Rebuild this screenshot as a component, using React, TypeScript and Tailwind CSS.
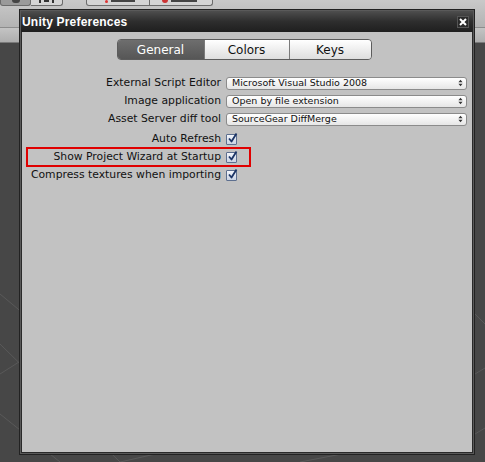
import React from 'react';

const rows = [
  { label: 'External Script Editor', value: 'Microsoft Visual Studio 2008' },
  { label: 'Image application', value: 'Open by file extension' },
  { label: 'Asset Server diff tool', value: 'SourceGear DiffMerge' },
];

const checks = [
  { label: 'Auto Refresh' },
  { label: 'Show Project Wizard at Startup', marked: true },
  { label: 'Compress textures when importing' },
];

function Checkbox() {
  return (
    <div className="w-[11px] h-[11px] border border-[#5d6f8f] rounded-[1px] bg-gradient-to-b from-[#f4f6fb] to-[#c9d3e4] relative">
      <svg viewBox="0 0 11 11" className="absolute -top-[2px] left-0 w-[11px] h-[11px] overflow-visible">
        <path d="M2 5.5 L4.5 8.5 L9.5 0.5" fill="none" stroke="#1c3566" strokeWidth="1.8" strokeLinejoin="round" />
      </svg>
    </div>
  );
}

function Dropdown({ value }: { value: string }) {
  return (
    <div className="w-[241px] h-[13px] rounded-[3px] border border-[#8b8b8b] bg-gradient-to-b from-white to-[#e6e6e6] flex items-center justify-between pl-[5px] pr-[3px] text-[9.5px] leading-none text-[#111]">
      <span>{value}</span>
      <svg viewBox="0 0 6 9" className="w-[5px] h-[8px]">
        <path d="M0.5 3.5 L3 0.5 L5.5 3.5 Z M0.5 5.5 L3 8.5 L5.5 5.5 Z" fill="#333" />
      </svg>
    </div>
  );
}

export default function App() {
  return (
    <div
      className="relative w-[485px] h-[462px] overflow-hidden bg-[#474747]"
      style={{ fontFamily: '"DejaVu Sans", "Liberation Sans", sans-serif' }}
    >
      {/* toolbar strip */}
      <div className="h-[28px] bg-gradient-to-b from-[#c9c9c9] to-[#b3b3b3] border-b border-[#8c8c8c] relative">
        <div className="flex">
          <div className="w-[31px] h-[6px] bg-[#9a9a9a] border border-t-0 border-[#6b6b6b] rounded-b-[3px] flex justify-center">
            <div className="w-[8px] h-[3px] bg-[#444] rounded-b-full" />
          </div>
          <div className="w-[32px] h-[6px] bg-[#d4d4d4] border border-t-0 border-l-0 border-[#6b6b6b] rounded-br-[3px] flex justify-center gap-[3px]">
            <div className="w-[2px] h-[3px] bg-[#333]" />
            <div className="w-[5px] h-[2px] bg-[#333]" />
            <div className="w-[2px] h-[3px] bg-[#333]" />
          </div>
          <div className="ml-[23px] w-[64px] h-[6px] bg-[#d4d4d4] border border-t-0 border-[#6b6b6b] rounded-bl-[3px] flex items-start pl-[18px] gap-[3px]">
            <div className="w-[3px] h-[3px] bg-[#d33] rounded-full" />
            <div className="w-[24px] h-[2px] bg-[#444]" />
          </div>
          <div className="w-[63px] h-[6px] bg-[#d4d4d4] border border-t-0 border-l-0 border-[#6b6b6b] rounded-br-[3px] flex items-start pl-[12px] gap-[3px]">
            <div className="w-[6px] h-[3px] bg-[#c33] rounded-b-full" />
            <div className="w-[26px] h-[2px] bg-[#444]" />
          </div>
        </div>
      </div>
      <div className="h-[15px] bg-gradient-to-b from-[#c4c4c4] to-[#aeaeae] border-b border-[#7a7a7a]" />

      {/* scene grid */}
      <svg className="absolute left-0 top-[44px] w-[485px] h-[418px]" viewBox="0 0 485 418">
        <g stroke="#595959" strokeWidth="1" fill="none">
          <path d="M0 300 L120 418" />
          <path d="M0 370 L60 418" />
          <path d="M0 250 L60 300" />
          <path d="M0 330 L19 318" />
          <path d="M475 330 L485 324" />
          <path d="M475 390 L485 384" />
          <path d="M475 270 L485 280" />
          <path d="M120 418 L200 400" />
          <path d="M300 418 L420 395" />
        </g>
      </svg>

      {/* preferences window */}
      <div className="absolute left-[19px] top-[9px] w-[456px] h-[446px] border border-[#222] bg-[#5a5a5a] p-[1px] flex flex-col">
        <div className="h-[21px] bg-gradient-to-b from-[#4e4e4e] via-[#2e2e2e] to-[#1f1f1f] flex items-center justify-between pl-[1px] pr-[4px]">
          <span
            className="text-white font-bold text-[12px] leading-none tracking-[0.2px]"
            style={{ fontFamily: '"Liberation Sans", sans-serif' }}
          >
            Unity Preferences
          </span>
          <div className="w-[12px] h-[12px] bg-[#2a2a2a] border border-[#555] flex items-center justify-center">
            <svg viewBox="0 0 8 8" className="w-[8px] h-[8px]">
              <path d="M1 1 L7 7 M7 1 L1 7" stroke="white" strokeWidth="2" />
            </svg>
          </div>
        </div>
        <div className="flex-1 bg-[#c2c2c2] border border-[#2a2a2a] border-t-0 text-[#111]">
          {/* tabs */}
          <div className="flex justify-center pt-[7px] pr-[6px]">
            <div className="flex h-[21px] w-[255px] rounded-[4px] border border-[#5c5c5c] overflow-hidden text-[12px]">
              <div className="w-[86px] flex items-center justify-center text-white bg-gradient-to-b from-[#6e6e6e] to-[#565656]">
                General
              </div>
              <div className="w-[85px] flex items-center justify-center bg-gradient-to-b from-white to-[#dedede] border-l border-[#7a7a7a]">
                Colors
              </div>
              <div className="flex-1 flex items-center justify-center bg-gradient-to-b from-white to-[#dedede] border-l border-[#7a7a7a]">
                Keys
              </div>
            </div>
          </div>

          {/* settings */}
          <div className="mt-[14px] flex flex-col text-[10.8px] leading-none">
            {rows.map((r) => (
              <div key={r.label} className="h-[18px] flex items-center">
                <div className="w-[199px] text-right">{r.label}</div>
                <div className="ml-[5px]">
                  <Dropdown value={r.value} />
                </div>
              </div>
            ))}
            <div className="mt-[2px] flex flex-col">
              {checks.map((c) => (
                <div key={c.label} className="h-[18px] flex items-center relative">
                  <div className="w-[199px] text-right">{c.label}</div>
                  <div className="ml-[5px]">
                    <Checkbox />
                  </div>
                  {c.marked && (
                    <div className="absolute left-[4px] top-[-1px] w-[225px] h-[20px] border-2 border-[#e00000]" />
                  )}
                </div>
              ))}
            </div>
          </div>
        </div>
      </div>
    </div>
  );
}
